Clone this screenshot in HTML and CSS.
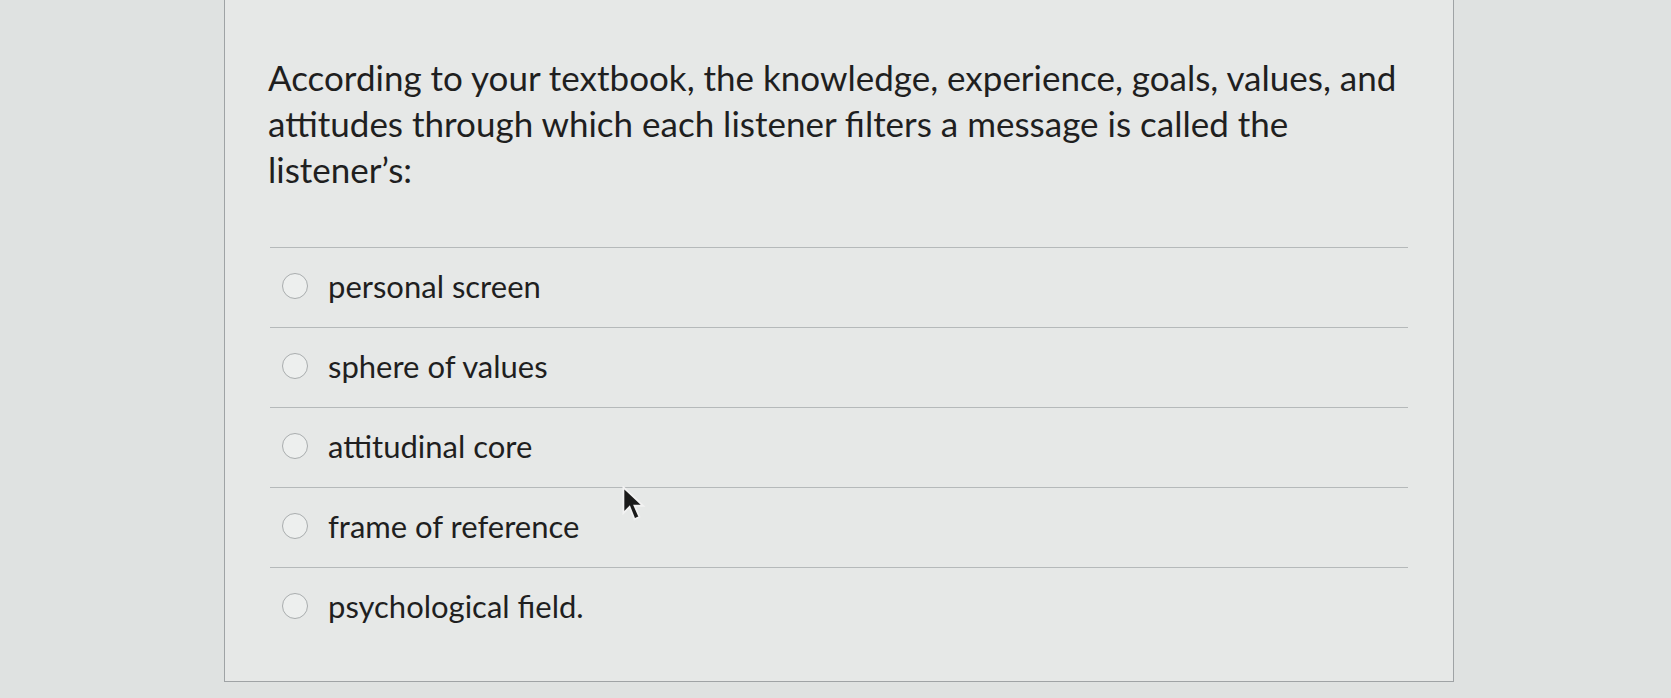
FILE: index.html
```html
<!DOCTYPE html>
<html>
<head>
<meta charset="utf-8">
<link rel="stylesheet" href="styles.css">
</head>
<body>
<div class="page">
  <div class="card">
    <div class="question">According to your textbook, the knowledge, experience, goals, values, and attitudes through which each listener filters a message is called the listener’s:</div>
    <div class="answers">
      <div class="answer"><span class="radio"></span><span class="label">personal screen</span></div>
      <div class="answer"><span class="radio"></span><span class="label">sphere of values</span></div>
      <div class="answer"><span class="radio"></span><span class="label">attitudinal core</span></div>
      <div class="answer"><span class="radio"></span><span class="label">frame of reference</span></div>
      <div class="answer"><span class="radio"></span><span class="label">psychological field.</span></div>
    </div>
    <svg class="cursor" width="25" height="37" viewBox="0 0 20 30"><path d="M1 1 L1 22 L6 17 L10 27 L14 25 L10 16 L17 16 Z" fill="#1a1a1a" stroke="#f2f2f2" stroke-width="1.5"/></svg>
  </div>
</div>
</body>
</html>
```

FILE: styles.css
```css
html, body {
  margin: 0;
  padding: 0;
  background: #dfe2e1;
  height: 698px;
  overflow: hidden;
}
.page {
  padding-left: 224px;
}
.card {
  position: relative;
  box-sizing: border-box;
  width: 1230px;
  height: 684px;
  margin-top: -2px;
  background: #e6e8e7;
  border: 1.5px solid #9fa3a5;
  padding: 55px 48px 0 43px;
  font-family: Lato, "Open Sans", sans-serif;
  color: #1f1f1f;
}
.question {
  font-size: 35px;
  line-height: 46px;
  width: 1160px;
}
.answers {
  margin-top: 55px;
  width: 1138px;
  margin-left: 2px;
}
.answer {
  box-sizing: border-box;
  height: 80px;
  border-top: 1.5px solid #b5b9ba;
  display: flex;
  align-items: center;
  padding-bottom: 4px;
}
.radio {
  box-sizing: border-box;
  width: 26px;
  height: 26px;
  border-radius: 50%;
  border: 1.5px solid #a9adae;
  background: #edefee;
  margin-left: 12px;
  margin-right: 20px;
}
.label {
  font-size: 31px;
}
.cursor {
  position: absolute;
  left: 397px;
  top: 487px;
}
```
